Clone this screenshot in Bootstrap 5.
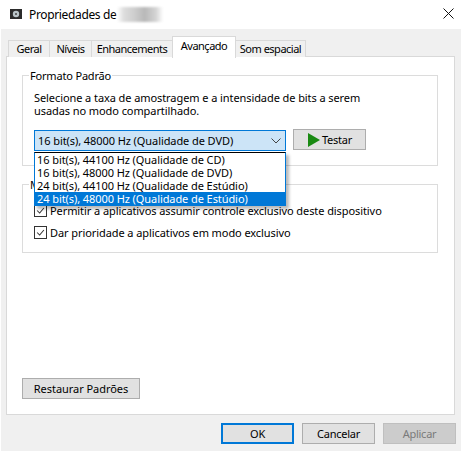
<!DOCTYPE html>
<html lang="pt"><head><meta charset="utf-8">
<link href="https://cdn.jsdelivr.net/npm/bootstrap@5.3.0/dist/css/bootstrap.min.css" rel="stylesheet">
<style>
html,body{height:451px;overflow:hidden}
body{background:#f0f0f0;font-family:"Noto Sans","Open Sans",sans-serif;font-size:11px;line-height:13px;color:#000;display:flex;flex-direction:column;width:461px;letter-spacing:-.08px;box-shadow:inset 1px 0 #fff}
.titlebar{height:29px;background:#fff;padding-left:10px;gap:6px;flex:none;font-size:12px;position:relative;letter-spacing:-.35px}
.blurname{width:46px;height:15px;background:linear-gradient(90deg,#fff,#ddd 15%,#ccc 40%,#b8b8b8 60%,#d5d5d5 85%,#fff);filter:blur(1px);margin-left:-5px}
.closex{position:absolute;left:443px;top:8px}
.tabrow{padding:7px 0 0 8px;height:28px;flex:none;align-items:flex-end;position:relative;z-index:2;letter-spacing:-.5px}
.wintab{height:17px;border:1px solid #d9d9d9;border-bottom:0;margin-right:-1px;background:#f0f0f0;padding-top:1px;text-align:center;white-space:nowrap}
.wintab.sel{height:22px;background:#fff;padding-top:2px;margin-bottom:-1px;position:relative;z-index:1}
.tw1{width:42px}.tw2{width:43px}.tw3{width:82px}.tw4{width:64px}.tw5{width:71px}
.panel{margin:-1px 6px 0 6px;height:359px;background:#fff;border:1px solid #d9d9d9;flex:none;padding:18px 16px 0 15px;position:relative}
.grp{border:1px solid #dcdcdc;position:relative}
.grp1{height:91px;padding:15px 11px 0 11px}
.grp2{height:69px;margin-top:18px;padding:18px 11px 0 11px}
.grptitle{position:absolute;top:-7px;left:6px;background:#fff;padding:0 1px;letter-spacing:-.18px}
.desc{margin:0 0 13px;line-height:13px}
.combo{width:252px;height:21px;background:#cce4f7;border:1px solid #0078d7;padding:0 4px 0 3px;justify-content:space-between;white-space:nowrap}
.winbtn{background:#e1e1e1;border:1px solid #adadad;height:21px;color:#000;font-size:11px;line-height:13px;padding:0;display:flex;align-items:center;justify-content:center;white-space:nowrap;flex:none;border-radius:0;letter-spacing:-.25px}
.testbtn{width:73px;margin:-1px 0 0 7px;gap:1px}
.droplist{position:absolute;left:11px;top:76px;width:252px;background:#fff;border:1px solid #0078d7;border-top-color:#000;box-shadow:3px 3px 3px rgba(0,0,0,.28);z-index:5}
.opt{height:13px;line-height:13px;padding-left:2px;white-space:nowrap}
.opt.hot{background:#0078d7;color:#fff}
.chkline{gap:3px;height:14px;white-space:nowrap}
.chkline + .chkline{margin-top:8px}
.boxchk{width:13px;height:13px;border:1px solid #333;background:#fff;flex:none;display:block}
.restore{width:118px;margin-top:125px;letter-spacing:-.05px}
.footer{gap:8px;padding:8px 0 0 221px}
.footer .winbtn{width:73px}
.okbtn{border:2px solid #0078d7!important}
.offbtn{background:#ccc!important;border-color:#bfbfbf!important;color:#7a7a7a!important}
</style></head>
<body>
<div class="titlebar d-flex align-items-center">
<svg width="13" height="13" viewBox="0 0 13 13"><rect x="0" y="1" width="12" height="10" fill="#2b2b2b"/><circle cx="6" cy="6" r="3.200" fill="#b9c4c8"/><circle cx="6" cy="6" r="1" fill="#444"/></svg>
<span>Propriedades de</span><span class="blurname"></span>
<svg class="closex" width="11" height="11" viewBox="0 0 11 11"><path d="M.5.5l10 10M10.500.5l-10 10" stroke="#111" stroke-width="1" fill="none"/></svg>
</div>
<div class="tabrow d-flex">
<div class="wintab tw1">Geral</div><div class="wintab tw2">Níveis</div><div class="wintab tw3">Enhancements</div><div class="wintab tw4 sel">Avançado</div><div class="wintab tw5">Som espacial</div>
</div>
<div class="panel">
<div class="grp grp1">
<span class="grptitle">Formato Padrão</span>
<p class="desc">Selecione a taxa de amostragem e a intensidade de bits a serem<br>usadas no modo compartilhado.</p>
<div class="d-flex align-items-start">
<div class="combo d-flex align-items-center"><span>16 bit(s), 48000 Hz (Qualidade de DVD)</span><svg width="10" height="6" viewBox="0 0 10 6"><path d="M.5.5L5 5 9.500.5" stroke="#444" fill="none"/></svg></div>
<button class="winbtn testbtn" type="button"><svg width="14" height="14" viewBox="0 0 14 14"><path d="M1 0l12 7L1 14z" fill="#1a8a12"/></svg>Testar</button>
</div>
<div class="droplist">
<div class="opt">16 bit(s), 44100 Hz (Qualidade de CD)</div>
<div class="opt">16 bit(s), 48000 Hz (Qualidade de DVD)</div>
<div class="opt">24 bit(s), 44100 Hz (Qualidade de Estúdio)</div>
<div class="opt hot">24 bit(s), 48000 Hz (Qualidade de Estúdio)</div>
</div>
</div>
<div class="grp grp2">
<span class="grptitle">Modo Exclusivo</span>
<div class="chkline d-flex align-items-center"><svg class="boxchk" viewBox="0 0 13 13"><path d="M2.500 6.500l3 3 5-6" stroke="#333" stroke-width="1.200" fill="none"/></svg><span>Permitir a aplicativos assumir controle exclusivo deste dispositivo</span></div>
<div class="chkline d-flex align-items-center"><svg class="boxchk" viewBox="0 0 13 13"><path d="M2.500 6.500l3 3 5-6" stroke="#333" stroke-width="1.200" fill="none"/></svg><span>Dar prioridade a aplicativos em modo exclusivo</span></div>
</div>
<button class="winbtn restore" type="button">Restaurar Padrões</button>
</div>
<div class="footer d-flex">
<button class="winbtn okbtn" type="button">OK</button>
<button class="winbtn" type="button">Cancelar</button>
<button class="winbtn offbtn" type="button">Aplicar</button>
</div>
<script src="https://cdn.jsdelivr.net/npm/bootstrap@5.3.0/dist/js/bootstrap.bundle.min.js"></script>
</body></html>
